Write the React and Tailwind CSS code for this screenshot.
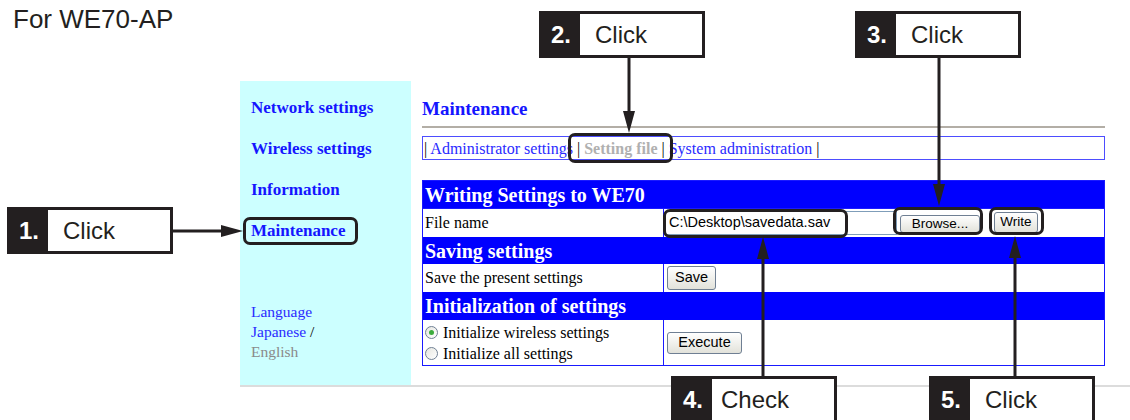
function Callout({ n, label, pos, pad }) {
  return (
    <div className={`absolute flex h-[47px] w-[166px] border-[3px] border-[#231f20] bg-white font-['Liberation_Sans',Arial,sans-serif] ${pos}`}>
      <div className="flex w-[38px] items-center justify-center bg-[#231f20] text-[24px] font-bold text-white">
        {n}.
      </div>
      <div className={`flex items-center text-[24px] text-[#231f20] ${pad}`}>{label}</div>
    </div>
  );
}

function Mark({ pos }) {
  return <div className={`absolute rounded-[7px] border-[3px] border-[#231f20] ${pos}`} />;
}

function Btn({ children, cls }) {
  return (
    <div
      className={`flex items-center justify-center rounded-[3px] border border-[#6f7f93] bg-gradient-to-b from-white to-[#e2e2da] font-['Liberation_Sans',Arial,sans-serif] text-black ${cls}`}
    >
      {children}
    </div>
  );
}

function Radio({ checked }) {
  return (
    <span className="ml-[1px] mr-[5px] flex h-[13px] w-[13px] items-center justify-center rounded-full border border-[#6f7f93] bg-gradient-to-br from-[#e6e6e0] to-white">
      {checked && <span className="h-[5px] w-[5px] rounded-full bg-[#3cab3c]" />}
    </span>
  );
}

export default function App() {
  const down = (x, y1, y2) => (
    <g key={`d${x}`}>
      <line x1={x} y1={y1} x2={x} y2={y2 - 18} stroke="#231f20" strokeWidth="3" />
      <polygon points={`${x - 6},${y2 - 22} ${x + 6},${y2 - 22} ${x},${y2}`} fill="#231f20" />
    </g>
  );
  const up = (x, y1, y2) => (
    <g key={`u${x}`}>
      <line x1={x} y1={y1} x2={x} y2={y2 + 18} stroke="#231f20" strokeWidth="3" />
      <polygon points={`${x - 6},${y2 + 22} ${x + 6},${y2 + 22} ${x},${y2}`} fill="#231f20" />
    </g>
  );

  return (
    <div className="relative h-[420px] w-[1130px] overflow-hidden bg-white">
      {/* title */}
      <div className="h-[81px] pl-[13px] pt-[6px] font-['Liberation_Sans',Arial,sans-serif] text-[26px] leading-[26px] text-[#231f20]">
        For WE70-AP
      </div>

      {/* browser screenshot */}
      <div className="ml-[240px] flex w-[890px] border-b-2 border-[#dcdcdc] font-['Liberation_Serif',serif]">
        {/* side menu */}
        <div className="flex h-[304px] w-[171px] flex-col bg-[#ccffff] pl-[11px] pt-[17px]">
          <div className="flex flex-col gap-[21px] text-[17px] font-bold leading-[20px] text-[#1515ff]">
            <span>Network settings</span>
            <span>Wireless settings</span>
            <span>Information</span>
            <span>Maintenance</span>
          </div>
          <div className="mt-[61px] flex flex-col text-[15.5px] leading-[20px]">
            <span className="text-[#2a2aff]">Language</span>
            <span className="text-[#2a2aff]">
              Japanese <span className="text-black">/</span>
            </span>
            <span className="text-[#8a8a8a]">English</span>
          </div>
        </div>

        {/* content */}
        <div className="ml-[11px] w-[683px] pt-[16px]">
          <div className="text-[19px] font-bold leading-[24px] text-[#1515ff]">Maintenance</div>
          <div className="mt-[5px] h-[2px] bg-[#b3aea6]" />

          <div className="mt-[8px] flex h-[24px] items-center whitespace-pre border border-[#4d4dff] px-[1px] pt-[1px] text-[16px] leading-[20px]">
            <span>|</span>
            <span className="text-[#2a2aff]"> Administrator settings </span>
            <span>|</span>
            <span className="font-bold text-[#b0b0b0]"> Setting file </span>
            <span>|</span>
            <span className="text-[#2a2aff]"> System administration </span>
            <span>|</span>
          </div>

          {/* settings table */}
          <div className="mt-[20px] border border-[#1a1aff] text-[16px] text-black">
            <div className="flex h-[27px] items-center bg-[#0000ff] px-[2px] text-[20px] font-bold text-white">
              Writing Settings to WE70
            </div>
            <div className="flex h-[29px] border-t border-[#1a1aff]">
              <div className="flex w-[241px] items-center border-r border-[#1a1aff] px-[2px]">File name</div>
              <div className="flex items-center">
                <div className="ml-[1px] flex h-[24px] w-[232px] items-center border border-[#7f9db9] bg-white pl-[3px] font-['Liberation_Sans',Arial,sans-serif] text-[14.5px]">
                  {"C:\\Desktop\\savedata.sav"}
                </div>
                <Btn cls="ml-[3px] mt-[2px] h-[18px] w-[80px] text-[13.5px]">Browse...</Btn>
                <Btn cls="ml-[14px] mb-[2px] h-[21px] w-[44px] text-[13.5px]">Write</Btn>
              </div>
            </div>
            <div className="flex h-[27px] items-center bg-[#0000ff] px-[2px] text-[20px] font-bold text-white">
              Saving settings
            </div>
            <div className="flex h-[28px]">
              <div className="flex w-[241px] items-center border-r border-[#1a1aff] px-[2px]">
                Save the present settings
              </div>
              <div className="flex items-center pl-[3px]">
                <Btn cls="h-[24px] w-[49px] text-[14.5px]">Save</Btn>
              </div>
            </div>
            <div className="flex h-[28px] items-center bg-[#0000ff] px-[2px] text-[20px] font-bold text-white">
              Initialization of settings
            </div>
            <div className="flex h-[45px]">
              <div className="flex w-[241px] flex-col justify-center border-r border-[#1a1aff] pl-[1px] leading-[21px]">
                <div className="flex items-center">
                  <Radio checked />
                  <span>Initialize wireless settings</span>
                </div>
                <div className="flex items-center">
                  <Radio />
                  <span>Initialize all settings</span>
                </div>
              </div>
              <div className="flex items-center pl-[3px]">
                <Btn cls="h-[22px] w-[75px] text-[14.5px]">Execute</Btn>
              </div>
            </div>
          </div>
        </div>
      </div>

      {/* highlights */}
      <Mark pos="left-[243px] top-[217px] h-[28px] w-[115px]" />
      <Mark pos="left-[568px] top-[133px] h-[30px] w-[105px]" />
      <Mark pos="left-[663px] top-[209px] h-[29px] w-[185px]" />
      <Mark pos="left-[893px] top-[207px] h-[28px] w-[90px]" />
      <Mark pos="left-[989px] top-[207px] h-[28px] w-[55px]" />

      {/* arrows */}
      <svg className="pointer-events-none absolute left-0 top-0" width="1130" height="420">
        <line x1="173" y1="231" x2="225" y2="231" stroke="#231f20" strokeWidth="3" />
        <polygon points="221,225 221,237 243,231" fill="#231f20" />
        {down(629, 58, 133)}
        {down(939, 58, 206)}
        {up(763, 376, 237)}
        {up(1015, 376, 236)}
      </svg>

      {/* step callouts */}
      <Callout n="1" label="Click" pos="left-[7px] top-[207px]" pad="pl-[15px]" />
      <Callout n="2" label="Click" pos="left-[539px] top-[11px]" pad="pl-[15px]" />
      <Callout n="3" label="Click" pos="left-[855px] top-[11px]" pad="pl-[15px]" />
      <Callout n="4" label="Check" pos="left-[671px] top-[376px]" pad="pl-[9px]" />
      <Callout n="5" label="Click" pos="left-[929px] top-[376px]" pad="pl-[15px]" />
    </div>
  );
}
